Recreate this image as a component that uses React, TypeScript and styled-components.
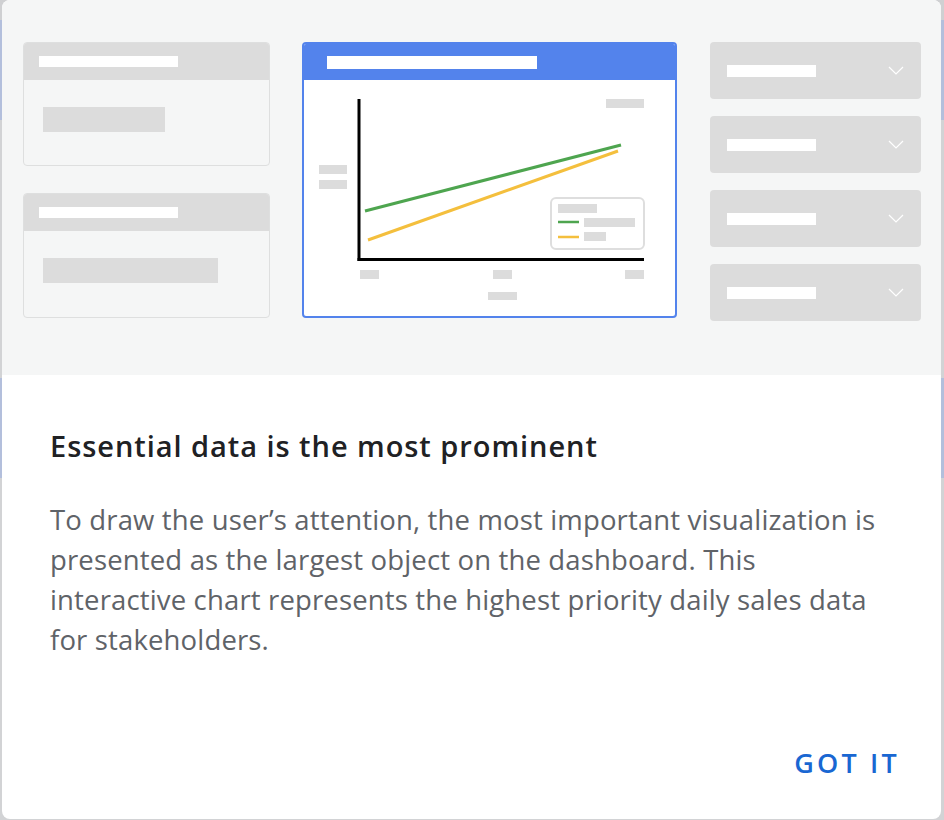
import React from "react";
import styled, { createGlobalStyle } from "styled-components";

const Global = createGlobalStyle`
  html, body { margin: 0; padding: 0; }
  body {
    width: 944px;
    height: 820px;
    overflow: hidden;
    background:
      linear-gradient(to bottom, #cfd0d2 0, #cfd0d2 20px, #b3bfdc 20px, #b3bfdc 120px, #d2d3d5 120px, #d2d3d5 378px, #b3bfdc 378px, #b3bfdc 478px, #d2d3d5 478px);
    font-family: "Open Sans", "Liberation Sans", sans-serif;
  }
`;

const Page = styled.div`
  width: 944px;
  height: 820px;
  padding-left: 2px;
  box-sizing: border-box;
`;

const Dialog = styled.div`
  width: 939px;
  height: 819px;
  background: #ffffff;
  border-radius: 8px;
  overflow: hidden;
  display: flex;
  flex-direction: column;
`;

const Illustration = styled.div`
  height: 375px;
  flex: none;
  box-sizing: border-box;
  background: #f5f6f6;
  padding: 42px 20px 0 21px;
  display: flex;
  align-items: flex-start;
`;

const LeftColumn = styled.div`
  width: 247px;
  display: flex;
  flex-direction: column;
  gap: 27px;
`;

const MiniCard = styled.div<{ $h: number }>`
  height: ${(p) => p.$h}px;
  box-sizing: border-box;
  border: 1.5px solid #dedfdf;
  border-radius: 4px;
  overflow: hidden;
  background: #f5f6f6;
`;

const MiniHeader = styled.div`
  height: 37px;
  background: #dcdcdc;
  display: flex;
  align-items: center;
  padding-left: 15px;
`;

const WhiteBar = styled.div<{ $w: number; $h?: number }>`
  width: ${(p) => p.$w}px;
  height: ${(p) => p.$h ?? 12}px;
  background: #ffffff;
`;

const GreyBlock = styled.div<{ $w: number }>`
  width: ${(p) => p.$w}px;
  height: 25px;
  background: #dcdcdc;
  margin: 27px 0 0 19px;
`;

const ChartCard = styled.div`
  width: 375px;
  height: 276px;
  margin-left: 32px;
  box-sizing: border-box;
  border: 2px solid #5383ec;
  border-radius: 4px;
  overflow: hidden;
  background: #ffffff;
  display: flex;
  flex-direction: column;
`;

const ChartHeader = styled.div`
  height: 36px;
  flex: none;
  background: #5383ec;
  display: flex;
  align-items: center;
  padding-left: 23px;
`;

const ChartBody = styled.div`
  flex: 1;
`;

const RightColumn = styled.div`
  width: 211px;
  margin-left: 33px;
  display: flex;
  flex-direction: column;
  gap: 17px;
`;

const Dropdown = styled.div`
  height: 57px;
  border-radius: 4px;
  background: #dcdcdc;
  display: flex;
  align-items: center;
  justify-content: space-between;
  padding: 0 17px 0 17px;
`;

const Content = styled.div`
  flex: 1;
  display: flex;
  flex-direction: column;
  padding: 52px 41px 0 48px;
`;

const Title = styled.h2`
  margin: 0;
  font-family: "Open Sans", "Liberation Sans", sans-serif;
  font-weight: 600;
  font-size: 29px;
  line-height: 38px;
  letter-spacing: 0.95px;
  color: #202124;
`;

const Body = styled.p`
  margin: 35px 0 0 0;
  font-family: "Open Sans", "Liberation Sans", sans-serif;
  font-weight: 400;
  font-size: 27.5px;
  line-height: 40px;
  letter-spacing: 0.15px;
  color: #5f6368;
`;

const Actions = styled.div`
  margin-top: auto;
  display: flex;
  justify-content: flex-end;
  padding-bottom: 38px;
`;

const Button = styled.button`
  border: none;
  background: transparent;
  font-family: "Open Sans", "Liberation Sans", sans-serif;
  font-weight: 600;
  font-size: 27px;
  letter-spacing: 3.2px;
  color: #1967d2;
  padding: 0;
  cursor: pointer;
`;

const Chevron = () => (
  <svg width="16" height="9" viewBox="0 0 16 9" fill="none">
    <path d="M1 1l7 7 7-7" stroke="#ffffff" strokeWidth="1.2" />
  </svg>
);

const ChartSvg = () => (
  <svg width="371" height="236" viewBox="0 0 371 236" style={{ display: "block" }}>
    <rect x="302" y="19" width="38" height="9" fill="#dcdcdc" />
    <rect x="15" y="85" width="28" height="9" fill="#dcdcdc" />
    <rect x="15" y="100" width="28" height="9" fill="#dcdcdc" />
    <line x1="61" y1="131" x2="317" y2="65" stroke="#4ea54f" strokeWidth="3" />
    <line x1="64" y1="160" x2="314" y2="71" stroke="#f4bf3d" strokeWidth="3" />
    <rect x="247" y="118" width="93" height="51" rx="5" fill="#ffffff" stroke="#dedede" strokeWidth="2" />
    <rect x="254" y="124" width="39" height="9" fill="#dcdcdc" />
    <line x1="254" y1="142" x2="275" y2="142" stroke="#4ea54f" strokeWidth="2.5" />
    <rect x="280" y="138" width="51" height="9" fill="#dcdcdc" />
    <line x1="254" y1="157" x2="275" y2="157" stroke="#f4bf3d" strokeWidth="2.5" />
    <rect x="280" y="152" width="22" height="9" fill="#dcdcdc" />
    <line x1="55" y1="19" x2="55" y2="181" stroke="#000" strokeWidth="3" />
    <line x1="53.5" y1="179.5" x2="340" y2="179.5" stroke="#000" strokeWidth="3" />
    <rect x="56" y="190" width="19" height="9" fill="#dcdcdc" />
    <rect x="189" y="190" width="19" height="9" fill="#dcdcdc" />
    <rect x="321" y="190" width="19" height="9" fill="#dcdcdc" />
    <rect x="184" y="212" width="29" height="8" fill="#dcdcdc" />
  </svg>
);

export default function App() {
  return (
    <>
      <Global />
      <Page>
        <Dialog>
          <Illustration>
            <LeftColumn>
              <MiniCard $h={124}>
                <MiniHeader>
                  <WhiteBar $w={139} $h={11} />
                </MiniHeader>
                <GreyBlock $w={122} />
              </MiniCard>
              <MiniCard $h={125}>
                <MiniHeader>
                  <WhiteBar $w={139} $h={11} />
                </MiniHeader>
                <GreyBlock $w={175} />
              </MiniCard>
            </LeftColumn>
            <ChartCard>
              <ChartHeader>
                <WhiteBar $w={210} $h={13} />
              </ChartHeader>
              <ChartBody>
                <ChartSvg />
              </ChartBody>
            </ChartCard>
            <RightColumn>
              {[0, 1, 2, 3].map((i) => (
                <Dropdown key={i}>
                  <WhiteBar $w={89} $h={12} />
                  <Chevron />
                </Dropdown>
              ))}
            </RightColumn>
          </Illustration>
          <Content>
            <Title>Essential data is the most prominent</Title>
            <Body>
              To draw the user’s attention, the most important visualization is
              <br />
              presented as the largest object on the dashboard. This
              <br />
              interactive chart represents the highest priority daily sales data
              <br />
              for stakeholders.
            </Body>
            <Actions>
              <Button>GOT IT</Button>
            </Actions>
          </Content>
        </Dialog>
      </Page>
    </>
  );
}
